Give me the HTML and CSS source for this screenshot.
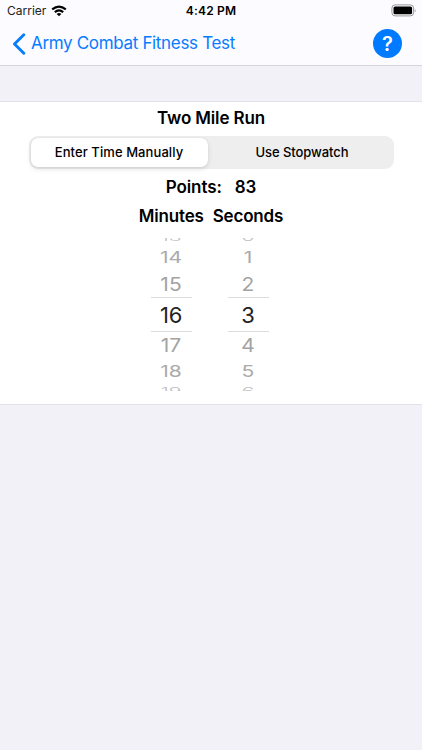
FILE: index.html
```
<!DOCTYPE html>
<html lang="en">
<head>
<meta charset="utf-8">
<meta name="viewport" content="width=device-width, initial-scale=1">
<title>Two Mile Run</title>
<link rel="stylesheet" href="styles.css">
</head>
<body>
<header class="top">
  <div class="status">
    <div class="carrier"><span>Carrier</span>
      <svg class="wifi" width="16" height="12" viewBox="0 0 16 12"><path d="M8 11.3 5.6 8.9Q8 7 10.4 8.9Z" fill="#000"/><path d="M3.8 7.1Q8 3.5 12.2 7.1M1.2 4.4Q8-1.3 14.8 4.4" fill="none" stroke="#000" stroke-width="2.1"/></svg>
    </div>
    <div class="clock">4:42 PM</div>
    <svg class="battery" width="26" height="13" viewBox="0 0 26 13"><rect x=".9" y=".9" width="21.7" height="11" rx="3.2" fill="none" stroke="#97979a"/><rect x="2.5" y="2.5" width="18.6" height="7.8" rx="1.6"/><path d="M23.8 4.4q1.6 2 0 4Z" fill="#97979a"/></svg>
  </div>
  <nav class="nav">
    <a class="back"><svg width="14" height="22" viewBox="0 0 14 22"><path d="M11.8 1.8 2.5 11l9.3 9.2" fill="none" stroke="#087cff" stroke-width="2.9" stroke-linecap="round" stroke-linejoin="round"/></svg><span>Army Combat Fitness Test</span></a>
    <a class="help">?</a>
  </nav>
</header>
<main class="card">
  <h1 class="title">Two Mile Run</h1>
  <div class="segments">
    <div class="segment selected">Enter Time Manually</div>
    <div class="segment">Use Stopwatch</div>
  </div>
  <div class="points"><span>Points:</span><span>83</span></div>
  <div class="labels"><span class="minutes">Minutes</span><span class="seconds">Seconds</span></div>
  <div class="pickers">
    <div class="picker">
      <div class="row far-up"><span>13</span></div>
      <div class="row mid-up"><span>14</span></div>
      <div class="row near-up"><span>15</span></div>
      <div class="row current"><span>16</span></div>
      <div class="row near-down"><span>17</span></div>
      <div class="row mid-down"><span>18</span></div>
      <div class="row far-down"><span>19</span></div>
    </div>
    <div class="picker">
      <div class="row far-up"><span>0</span></div>
      <div class="row mid-up"><span>1</span></div>
      <div class="row near-up"><span>2</span></div>
      <div class="row current"><span>3</span></div>
      <div class="row near-down"><span>4</span></div>
      <div class="row mid-down"><span>5</span></div>
      <div class="row far-down"><span>6</span></div>
    </div>
  </div>
</main>
</body>
</html>
```
FILE: styles.css
```
* { box-sizing: border-box; }
body { margin: 0; height: 750px; overflow: hidden; background: #f2f1f8; color: #000; font-family: Inter, "Liberation Sans", sans-serif; white-space: nowrap; }
.top { height: 66px; background: #fcfbff; border-bottom: 1px solid #d6d5da; }
.status { height: 22px; display: grid; grid-template-columns: 1fr auto 1fr; align-items: center; padding: 0 5px 0 7px; }
.carrier { display: flex; align-items: center; gap: 5px; font-size: 12px; color: #222; }
.carrier span { margin-top: -1px; }
.wifi { margin-top: -1px; }
.clock { font-size: 12px; font-weight: 600; letter-spacing: .2px; margin: -1px 0 0 -2px; }
.battery { justify-self: end; margin-top: -2px; }
.nav { height: 43px; display: flex; align-items: center; justify-content: space-between; padding: 0 20px 0 12px; }
.back { display: flex; align-items: center; gap: 5px; color: #087cff; font-size: 17px; letter-spacing: -.33px; }
.back span { margin-top: -1px; }
.help { width: 29px; height: 29px; border-radius: 50%; background: #007aff; color: #fff; display: flex; align-items: center; justify-content: center; font-size: 20px; font-weight: 600; }
.card { margin-top: 35px; height: 304px; background: #fff; border: solid #e3e2e9; border-width: 1px 0; display: flex; flex-direction: column; align-items: center; }
.title { margin: 4px 0 0; height: 24px; line-height: 24px; font-size: 17px; font-weight: 600; letter-spacing: -.13px; }
.segments { margin-top: 6px; width: 365px; height: 33px; display: flex; padding: 2px; border-radius: 9px; background: #eeeeef; }
.segment { flex: 1; display: flex; align-items: center; justify-content: center; padding: 0 0 1px 5px; font-size: 13px; font-weight: 500; letter-spacing: -.08px; }
.selected { flex: 0 0 177px; padding-left: 0; background: #fff; border-radius: 7px; letter-spacing: .08px; box-shadow: 0 2px 5px rgba(0,0,0,.12), 0 0 1px rgba(0,0,0,.1); }
.points, .labels { display: flex; font-size: 17px; font-weight: 600; height: 24px; line-height: 24px; letter-spacing: -.1px; }
.points { margin-top: 6px; gap: 13px; }
.labels { margin-top: 5px; gap: 9px; letter-spacing: -.18px; }
.pickers { margin-top: 10px; height: 153px; display: flex; gap: 36px; margin-left: -3px; }
.picker { width: 41px; display: flex; flex-direction: column; overflow: hidden; }
.row { flex: none; display: flex; align-items: center; justify-content: center; font-size: 21px; line-height: 24px; color: #aaa; }
.far-up { height: 6px; align-items: flex-end; color: #c0c0c0; font-weight: 300; }
.mid-up { height: 27px; }
.near-up { height: 26px; color: #a3a3a3; }
.current { height: 35px; border: solid #dcdcdc; border-width: 1px 0; color: #222; font-size: 22px; letter-spacing: -.2px; }
.near-down { height: 27px; color: #a3a3a3; }
.mid-down { height: 25px; }
.far-down { height: 7px; align-items: flex-start; color: #c0c0c0; font-weight: 300; }
.near-up span { transform: translateY(1px) scaleY(.9); }
.near-down span { transform: scaleY(.9); }
.mid-up span { transform: scaleY(.75); }
.mid-down span { transform: scaleY(.75); }
.far-up span { transform: translateY(-.5px) scaleY(.5); transform-origin: bottom; }
.far-down span { transform: translateY(1px) scaleY(.5); transform-origin: top; }
```
